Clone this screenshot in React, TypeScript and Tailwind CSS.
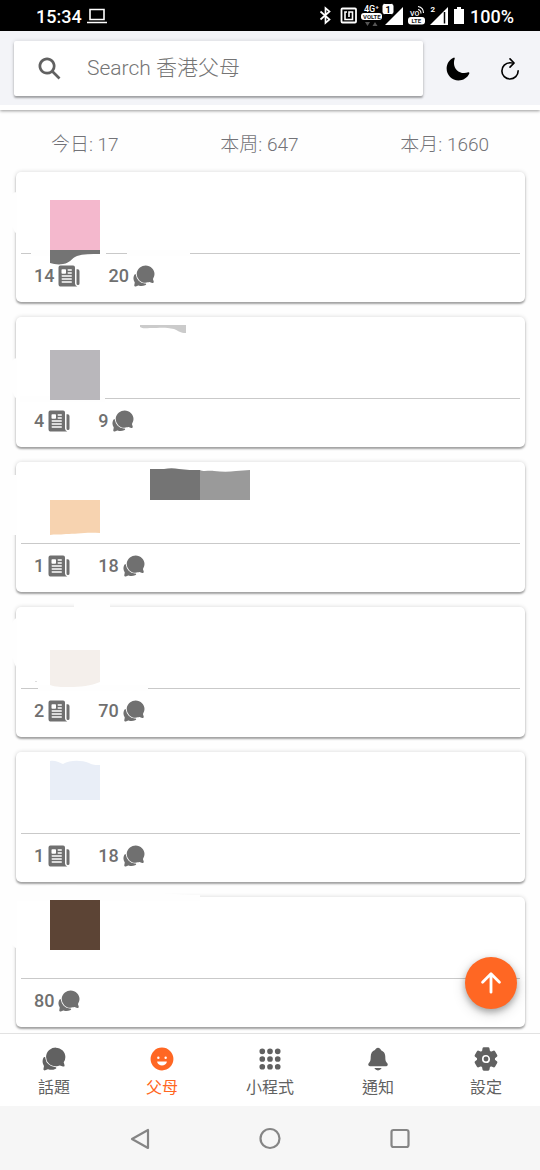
import type { ReactNode } from "react";
import {
  IoApps,
  IoArrowUp,
  IoChatbubbles,
  IoHappy,
  IoMoon,
  IoNewspaper,
  IoNotifications,
  IoRefresh,
  IoSearchSharp,
  IoSettings,
} from "react-icons/io5";

type Post = { news?: number; chats: number; art: ReactNode };

const posts: Post[] = [
  {
    news: 14,
    chats: 20,
    art: (
      <>
        <path fill="#fefefe" d="M12 22 Q14 20 17 20 V62 Q14 60 12 54Z M31 78 H106 V84 H31Z M127 78 H190 V84 H127Z" />
        <path fill="#f4b8cd" d="M50 28h50v50H50z" />
        <path fill="#747474" d="M50 78h50v4c-9 0-17 0-23 2-6 2-6 7-14 8-5 1-9 0-13-1z" />
      </>
    ),
  },
  {
    news: 4,
    chats: 9,
    art: (
      <>
        <path fill="#fefefe" d="M12 44 Q14 41 17 41 V82 Q14 80 12 74Z M20 79 H105 V85 H20Z" />
        <path fill="#cbcbcb" d="M140 8h46v8c-6 0-7-2-12-4-9-2-14-1-24-1-4 0-7 1-10-1z" />
        <path fill="#b9b7bb" d="M50 33h50v50H50z" />
      </>
    ),
  },
  {
    news: 1,
    chats: 18,
    art: (
      <>
        <path fill="#fefefe" d="M12 13h5v60h-5z" />
        <path fill="#747474" d="M150 7h14c5-1 10-1 15 0 7 1 14 1 21 1v30h-50z" />
        <path fill="#9a9a9a" d="M200 8c3 2 10 0 14 1 8 1 15 1 22 0l14-1v30h-50z" />
        <path fill="#f7d3b0" d="M50 38h50v33c-15-1-24 1-34 1-7 1-11 0-16 1z" />
      </>
    ),
  },
  {
    news: 2,
    chats: 70,
    art: (
      <>
        <path fill="#fefefe" d="M12 16 Q15 10 17 12 V62 Q14 56 12 50Z M74-4 H110 V3 H74Z M38 78 H148 V84 H38Z" />
        <path fill="#f4efeb" d="M50 43h50v32c-9 4-20 5-31 5-8 0-13 0-19-2z" />
        <path fill="#dedede" d="M35 74h2v1h-2z" />
      </>
    ),
  },
  {
    news: 1,
    chats: 18,
    art: <path fill="#e9eef7" d="M50 9c5-1 8 1 13 3 7-4 18-4 26-1 4 2 6 2 11 2v35H50z" />,
  },
  {
    chats: 80,
    art: (
      <>
        <path fill="#fefefe" d="M12-9 Q60-14 120-9 Q170-2 200-2 V4 H17 V52 L12 48Z" />
        <path fill="#5c4435" d="M50 3h50v50H50z" />
      </>
    ),
  },
];

function Count({ value, label, children }: { value: number; label: string; children: ReactNode }) {
  return (
    <button type="button" aria-label={`${value} ${label}`} className="flex items-center gap-[3px]">
      <span>{value}</span>
      {children}
    </button>
  );
}

function PostCard({ post }: { post: Post }) {
  return (
    <article className="relative rounded-[5px] bg-white px-[5px] shadow-[0_2px_2px_rgba(0,0,0,0.32),0_0_4px_rgba(0,0,0,0.16)]">
      <div className="h-[82px] border-b border-[#c9c9c9]" />
      <svg
        aria-hidden="true"
        className="absolute top-0 -left-4 overflow-visible"
        width="280"
        height="130"
        viewBox="0 0 280 130"
      >
        {post.art}
      </svg>
      <footer className="relative flex h-12 items-start gap-[27px] px-[13px] pt-[10px] text-[18px] leading-6 font-medium text-[#707070]">
        {post.news !== undefined && (
          <Count value={post.news} label="news">
            <IoNewspaper className="size-6" />
          </Count>
        )}
        <Count value={post.chats} label="comments">
          <IoChatbubbles className="size-6" />
        </Count>
      </footer>
    </article>
  );
}

function StatusBar() {
  return (
    <div className="flex h-[31px] items-center justify-between bg-black pt-px pr-[26px] pl-9 text-[18px] font-medium text-white">
      <div className="flex items-center gap-[5px]">
        <span>15:34</span>
        <svg width="20" height="16" viewBox="0 0 20 16" fill="none" stroke="currentColor" strokeWidth="1.6" aria-hidden="true">
          <path d="M3 1.5h14v10H3zM0 14.5h20" />
        </svg>
      </div>
      <div className="flex items-center gap-[5px]">
        <svg width="146" height="28" viewBox="318 2 146 28" fill="none" stroke="#fff" aria-hidden="true">
          <path strokeWidth="1.7" d="M319.500 11.500l9 8-4 3.500V8l4 3.500-9 8" />
          <rect x="340.500" y="8.500" width="14.500" height="14" strokeWidth="1.800" rx="1" />
          <path strokeWidth="1.600" d="M346 12h-2v7.500h7.500V12h-3.500v5" />
          <rect x="360" y="13" width="21" height="7" rx="3" fill="#fff" stroke="none" />
          <path fill="#555" stroke="none" d="M364 22h5l-2.500 4zM371.500 26h5l-2.500-4z" />
          <path fill="#fff" stroke="none" d="M384 25l18-18v18z" />
          <rect x="381" y="3.500" width="12" height="11" rx="2.500" fill="#fff" stroke="#000" />
          <rect x="407" y="17" width="17" height="7.500" rx="3" fill="#fff" stroke="none" />
          <path strokeWidth="1.100" d="M417 9.500q3 .5 3 4M417 6.500q5.500 1 5.500 6.500" />
          <path fill="#fff" stroke="none" d="M429 25l18-18v18z" />
          <path stroke="#000" strokeWidth="1.500" d="M443.500 12v11.500" />
          <path fill="#fff" stroke="none" d="M456 7h4v2h3v15h-10V9h3z" />
          <g stroke="none" fill="#fff" fontFamily="Roboto, sans-serif" fontWeight="500">
            <text x="363" y="12" fontSize="9">4G⁺</text>
            <text x="362" y="19" fontSize="6" fontWeight="700" fill="#222">VOLTE</text>
            <text x="384.500" y="12.500" fontSize="9" fontWeight="700" fill="#000">1</text>
            <text x="409" y="15.500" fontSize="7">VO</text>
            <text x="410.500" y="23" fontSize="6" fontWeight="700" fill="#222">LTE</text>
            <text x="429.500" y="12" fontSize="8" fontWeight="700">2</text>
          </g>
        </svg>
        <span>100%</span>
      </div>
    </div>
  );
}

const tabs = [
  { label: "話題", Icon: IoChatbubbles, active: false },
  { label: "父母", Icon: IoHappy, active: true },
  { label: "小程式", Icon: IoApps, active: false },
  { label: "通知", Icon: IoNotifications, active: false },
  { label: "設定", Icon: IoSettings, active: false },
];

export default function App() {
  return (
    <div className="flex min-h-screen flex-col bg-[#fefefe] font-[Roboto,'Noto_Sans_CJK_TC',sans-serif]">
      <StatusBar />
      <header className="border-b-[5px] border-white bg-[#f3f4f8] shadow-[0_1px_3px_rgba(0,0,0,0.4)]">
        <div className="flex h-[74px] items-center pr-[17px] pl-[14px]">
          <label className="flex h-[55px] flex-1 items-center gap-6 rounded-xs bg-white pl-[22px] shadow-[0_2px_2px_rgba(0,0,0,0.3),0_0_4px_rgba(0,0,0,0.14)]">
            <IoSearchSharp className="size-[27px] shrink-0 text-[#616161]" aria-hidden="true" />
            <input
              type="search"
              aria-label="Search 香港父母"
              placeholder="Search 香港父母"
              className="min-w-0 flex-1 bg-transparent pt-px text-[21px] font-light outline-none placeholder:text-[#757575]"
            />
          </label>
          <button type="button" aria-label="Dark mode" className="ml-[22px] pt-px">
            <IoMoon className="size-[26px]" />
          </button>
          <button type="button" aria-label="Refresh" className="ml-[26px] pt-px">
            <IoRefresh className="size-[26px]" />
          </button>
        </div>
      </header>
      <main className="relative flex-1 pb-[5px]">
        <div className="flex h-[62px] items-center justify-around pt-[8px] text-[19px] font-light text-[#737378]">
          <span>今日: 17</span>
          <span>本周: 647</span>
          <span>本月: 1660</span>
        </div>
        <div className="flex flex-col gap-[15px] pr-[15px] pl-4">
          {posts.map((post, i) => (
            <PostCard key={i} post={post} />
          ))}
        </div>
        <button
          type="button"
          aria-label="Back to top"
          className="absolute right-[23px] bottom-6 flex size-[52px] items-center justify-center rounded-full bg-[#ff6723] text-white shadow-[0_3px_6px_rgba(0,0,0,0.28),0_4px_14px_rgba(0,0,0,0.16)]"
        >
          <IoArrowUp className="size-[30px]" />
        </button>
      </main>
      <nav className="flex h-[73px] border-t border-[#e2e2e2] bg-white">
        {tabs.map(({ label, Icon, active }) => (
          <button
            key={label}
            type="button"
            aria-current={active ? "page" : undefined}
            className={
              active
                ? "flex flex-1 flex-col items-center gap-1 pt-3 text-[#ff6723]"
                : "flex flex-1 flex-col items-center gap-1 pt-3 text-[#616161]"
            }
          >
            <Icon className="size-[26px]" />
            <span className="text-[16px] leading-6">{label}</span>
          </button>
        ))}
      </nav>
      <div className="flex h-16 items-center justify-center gap-[106px] bg-[#f6f6f6] text-[#858585]">
        <button type="button" aria-label="Back">
          <svg width="24" height="24" viewBox="0 0 24 24" fill="none" stroke="currentColor" strokeWidth="2.200" strokeLinejoin="round">
            <path d="M20 4v18L4 13z" />
          </svg>
        </button>
        <button type="button" aria-label="Home">
          <svg width="24" height="24" viewBox="0 0 24 24" fill="none" stroke="currentColor" strokeWidth="2.200">
            <circle cx="12" cy="12.500" r="9.500" />
          </svg>
        </button>
        <button type="button" aria-label="Recent apps">
          <svg width="24" height="24" viewBox="0 0 24 24" fill="none" stroke="currentColor" strokeWidth="2.200">
            <rect x="3.500" y="4" width="17" height="17" rx="2" />
          </svg>
        </button>
      </div>
    </div>
  );
}
